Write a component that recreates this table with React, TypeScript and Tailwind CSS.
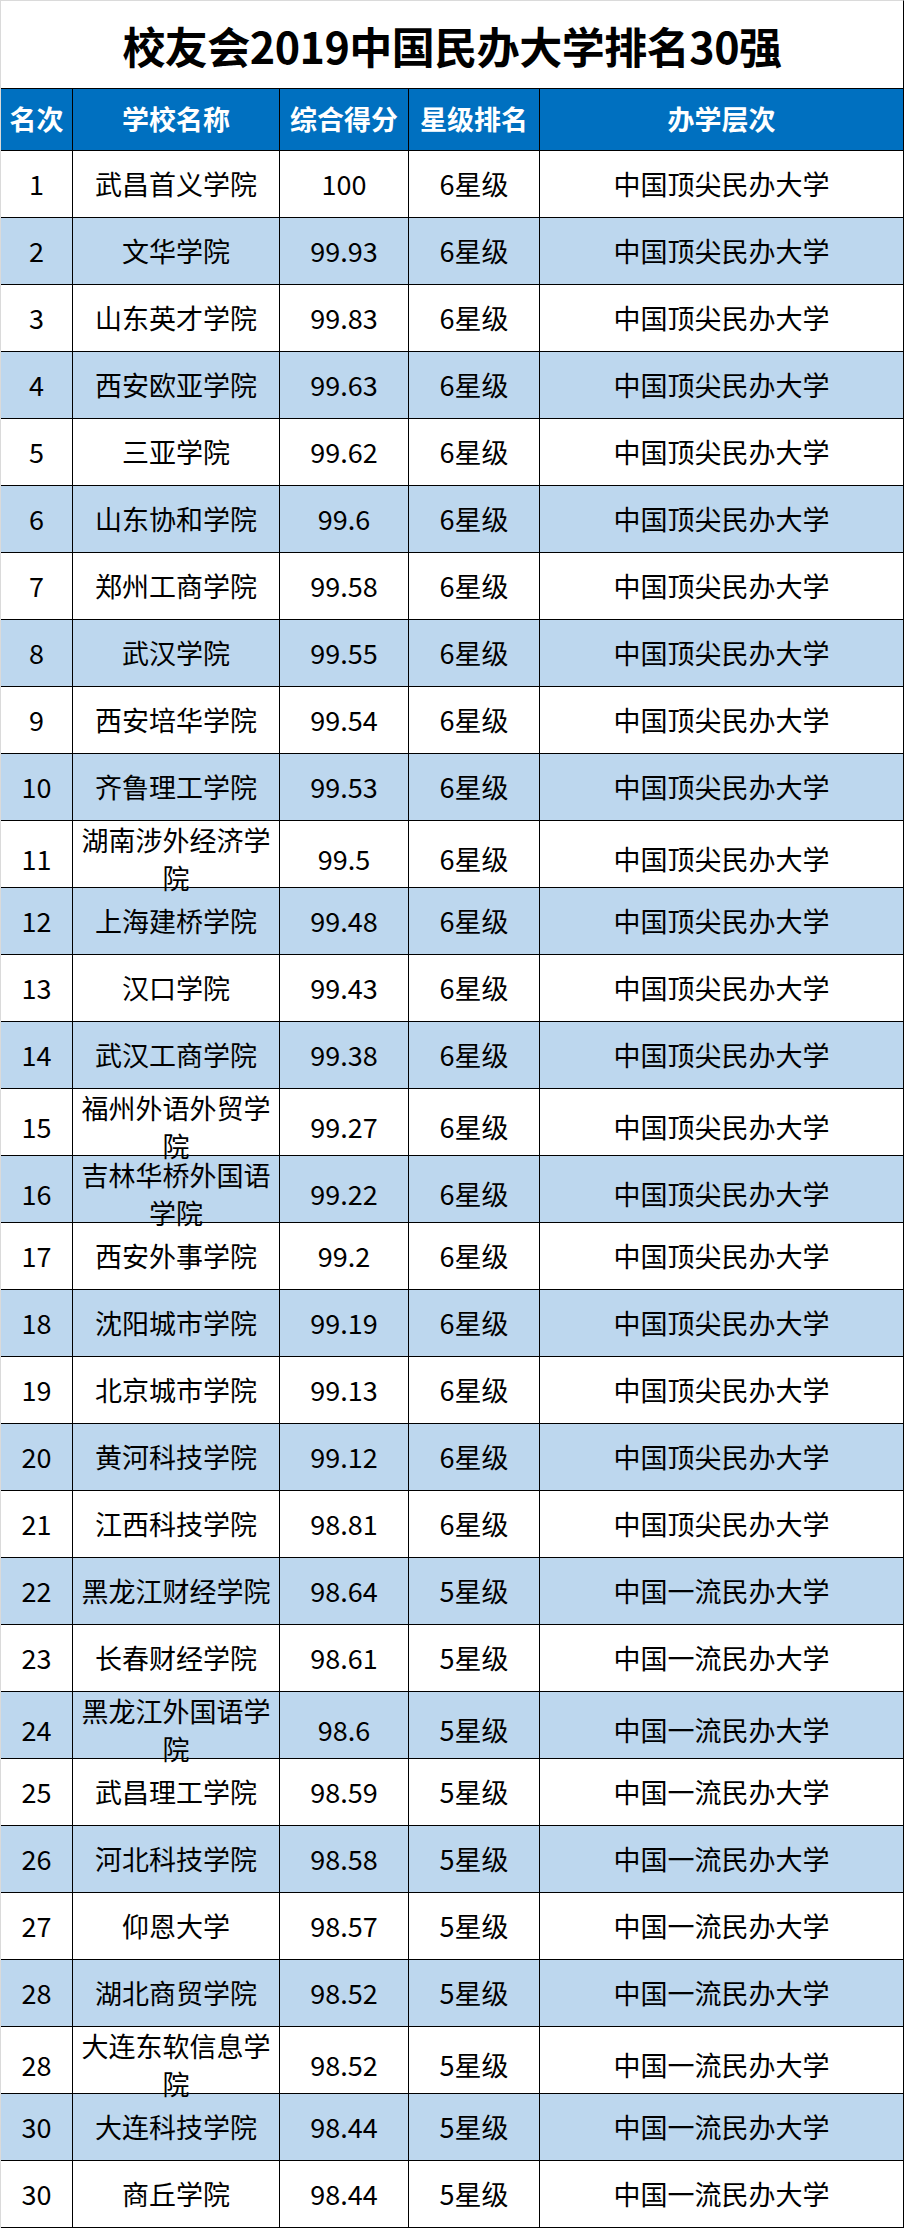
const rows: [string, string, string, string, string][] = [
  ["1", "武昌首义学院", "100", "6星级", "中国顶尖民办大学"],
  ["2", "文华学院", "99.93", "6星级", "中国顶尖民办大学"],
  ["3", "山东英才学院", "99.83", "6星级", "中国顶尖民办大学"],
  ["4", "西安欧亚学院", "99.63", "6星级", "中国顶尖民办大学"],
  ["5", "三亚学院", "99.62", "6星级", "中国顶尖民办大学"],
  ["6", "山东协和学院", "99.6", "6星级", "中国顶尖民办大学"],
  ["7", "郑州工商学院", "99.58", "6星级", "中国顶尖民办大学"],
  ["8", "武汉学院", "99.55", "6星级", "中国顶尖民办大学"],
  ["9", "西安培华学院", "99.54", "6星级", "中国顶尖民办大学"],
  ["10", "齐鲁理工学院", "99.53", "6星级", "中国顶尖民办大学"],
  ["11", "湖南涉外经济学院", "99.5", "6星级", "中国顶尖民办大学"],
  ["12", "上海建桥学院", "99.48", "6星级", "中国顶尖民办大学"],
  ["13", "汉口学院", "99.43", "6星级", "中国顶尖民办大学"],
  ["14", "武汉工商学院", "99.38", "6星级", "中国顶尖民办大学"],
  ["15", "福州外语外贸学院", "99.27", "6星级", "中国顶尖民办大学"],
  ["16", "吉林华桥外国语学院", "99.22", "6星级", "中国顶尖民办大学"],
  ["17", "西安外事学院", "99.2", "6星级", "中国顶尖民办大学"],
  ["18", "沈阳城市学院", "99.19", "6星级", "中国顶尖民办大学"],
  ["19", "北京城市学院", "99.13", "6星级", "中国顶尖民办大学"],
  ["20", "黄河科技学院", "99.12", "6星级", "中国顶尖民办大学"],
  ["21", "江西科技学院", "98.81", "6星级", "中国顶尖民办大学"],
  ["22", "黑龙江财经学院", "98.64", "5星级", "中国一流民办大学"],
  ["23", "长春财经学院", "98.61", "5星级", "中国一流民办大学"],
  ["24", "黑龙江外国语学院", "98.6", "5星级", "中国一流民办大学"],
  ["25", "武昌理工学院", "98.59", "5星级", "中国一流民办大学"],
  ["26", "河北科技学院", "98.58", "5星级", "中国一流民办大学"],
  ["27", "仰恩大学", "98.57", "5星级", "中国一流民办大学"],
  ["28", "湖北商贸学院", "98.52", "5星级", "中国一流民办大学"],
  ["28", "大连东软信息学院", "98.52", "5星级", "中国一流民办大学"],
  ["30", "大连科技学院", "98.44", "5星级", "中国一流民办大学"],
  ["30", "商丘学院", "98.44", "5星级", "中国一流民办大学"],
];

const cols = "grid grid-cols-[71px_207px_129px_131px_1fr]";

export default function App() {
  return (
    <div
      className="w-[904px] border-t border-l border-r border-t-[#dadada] border-l-[#dadada] border-r-black bg-white text-black"
      style={{ fontFamily: '"Noto Sans CJK SC", "Noto Sans", sans-serif' }}
    >
      <div className="flex h-[87px] items-center justify-center pt-[2px]">
        <h1 className="text-[43px] font-bold leading-none tracking-[-0.5px]">
          校友会2019中国民办大学排名30强
        </h1>
      </div>

      <div
        className={`${cols} h-[63px] border-y border-black bg-[#0070c0] text-[27px] font-bold text-white`}
      >
        <div className="flex items-center justify-center whitespace-nowrap">名次</div>
        <div className="flex items-center justify-center border-l border-black">学校名称</div>
        <div className="flex items-center justify-center whitespace-nowrap border-l border-black">综合得分</div>
        <div className="flex items-center justify-center whitespace-nowrap border-l border-black">星级排名</div>
        <div className="flex items-center justify-center border-l border-black">办学层次</div>
      </div>

      {rows.map((r, i) => (
        <div
          key={i}
          className={`${cols} h-[67px] border-b border-black text-[27px] ${
            i % 2 === 1 ? "bg-[#bdd7ee]" : "bg-white"
          }`}
        >
          <div className="flex items-center justify-center">{r[0]}</div>
          <div className="flex items-center justify-center border-l border-black text-center leading-[38px]">
            {r[1]}
          </div>
          <div className="flex items-center justify-center border-l border-black">{r[2]}</div>
          <div className="flex items-center justify-center border-l border-black">{r[3]}</div>
          <div className="flex items-center justify-center border-l border-black">{r[4]}</div>
        </div>
      ))}
    </div>
  );
}
